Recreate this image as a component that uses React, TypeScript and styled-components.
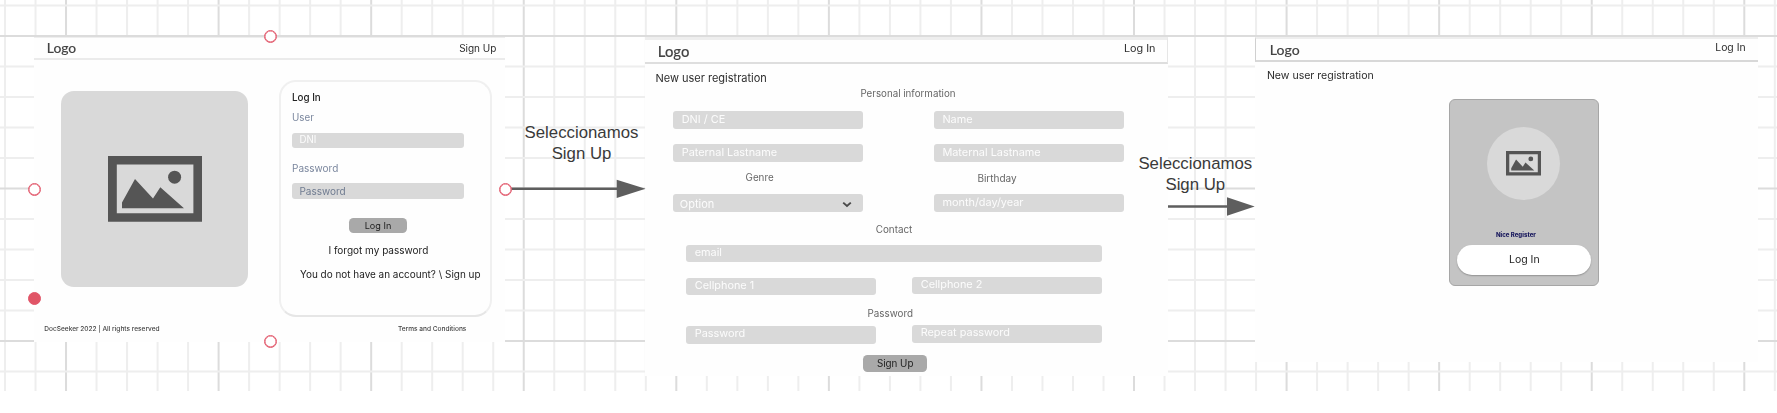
import styled, { createGlobalStyle } from 'styled-components';

const GlobalStyle = createGlobalStyle`
  * { box-sizing: border-box; }
  body { margin: 0; background: #fff; }
`;

const sans = 'Inter, "Liberation Sans", sans-serif';

/* ---------- canvas ---------- */

const Canvas = styled.main`
  position: relative;
  width: 1777px;
  height: 413px;
  overflow: hidden;
  background: #fff;
  font-family: ${sans};
`;

const GridLines = styled.svg`
  display: block;
`;

const Screen = styled.section<{ $x: number; $w: number; $h: number }>`
  position: absolute;
  left: ${p => p.$x}px;
  top: 37px;
  width: ${p => p.$w}px;
  height: ${p => p.$h}px;
  background: #fefefe;
  display: flex;
  flex-direction: column;
  align-items: flex-start;
  filter: blur(0.4px);
`;

const Handle = styled.span<{ $x: number; $y: number; $filled?: boolean }>`
  position: absolute;
  left: ${p => p.$x - 6.5}px;
  top: ${p => p.$y - 6.5}px;
  width: 13px;
  height: 13px;
  border: 1px solid #e2576a;
  border-radius: 50%;
  background: ${p => (p.$filled ? '#e05566' : '#fff')};
  box-shadow: inset 0 0 0 0.5px #e2576a;
`;

const Connector = styled.svg<{ $x: number; $y: number }>`
  position: absolute;
  left: ${p => p.$x}px;
  top: ${p => p.$y}px;
`;

const FlowLabel = styled.p<{ $x: number; $y: number }>`
  position: absolute;
  left: ${p => p.$x}px;
  top: ${p => p.$y}px;
  width: 130px;
  margin: 0;
  font: 16.8px/21px "Liberation Sans", Arial, sans-serif;
  text-align: center;
  color: #3a3a3a;
`;

/* ---------- shared screen parts ---------- */

const Header = styled.header<{ $h: number; $top: number; $pad: string; $line: string; $side?: string }>`
  display: flex;
  justify-content: space-between;
  align-items: flex-start;
  align-self: stretch;
  height: ${p => p.$h}px;
  padding: ${p => p.$pad};
  border-top: ${p => p.$top}px solid #eee;
  border-bottom: 2px solid ${p => p.$line};
  ${p => p.$side ?? ''}
`;

const Logo = styled.span<{ $size: number; $mt?: number }>`
  margin-top: ${p => p.$mt ?? 0}px;
  font: 500 ${p => p.$size}px/20px Lato, sans-serif;
  -webkit-text-stroke: 0.1px #444;
  color: #444;
`;

const Text = styled.span<{
  $size?: number; $mt?: number; $ml?: number; $color?: string; $weight?: number; $line?: number;
}>`
  display: block;
  flex: none;
  margin: ${p => p.$mt ?? 0}px 0 0 ${p => p.$ml ?? 0}px;
  font-size: ${p => p.$size ?? 10}px;
  font-weight: ${p => p.$weight ?? 400};
  line-height: ${p => p.$line ?? 14}px;
  color: ${p => p.$color ?? '#2c2c2c'};
  white-space: pre;
`;

const Field = styled.div<{
  $w: number; $h: number; $mt?: number; $ml?: number; $pad?: number; $line: number; $size?: number; $color?: string;
}>`
  display: flex;
  flex: none;
  justify-content: space-between;
  width: ${p => p.$w}px;
  height: ${p => p.$h}px;
  margin: ${p => p.$mt ?? 0}px 0 0 ${p => p.$ml ?? 0}px;
  padding: 0 11px 0 ${p => p.$pad ?? 8.4}px;
  border-radius: 3px;
  background: #d9d9d9;
  color: ${p => p.$color ?? '#fcfcfc'};
  font-size: ${p => p.$size ?? 10.9}px;
  line-height: ${p => p.$line}px;
  white-space: pre;
`;

const Button = styled.button<{ $w: number; $h: number; $mt: number; $ml: number; $line: number; $size: number }>`
  flex: none;
  width: ${p => p.$w}px;
  height: ${p => p.$h}px;
  margin: ${p => p.$mt}px 0 0 ${p => p.$ml}px;
  padding: 0;
  border: 0;
  border-radius: 4.5px;
  background: #a9a9a9;
  color: #1c1c1c;
  font-family: ${sans};
  font-size: ${p => p.$size}px;
  line-height: ${p => p.$line}px;
`;

const Row = styled.div<{ $mt: number; $ml: number; $gap: number }>`
  display: flex;
  align-items: flex-start;
  gap: ${p => p.$gap}px;
  margin: ${p => p.$mt}px 0 0 ${p => p.$ml}px;
`;

const Cell = styled.div<{ $pad: number }>`
  width: 189.7px;
  padding-left: ${p => p.$pad}px;
`;

const Picture = ({ width }: { width: number }) => (
  <svg width={width} height={width * 0.7} viewBox="0 0 94 65.8">
    <path fill="#555" fillRule="evenodd" d="M0 0H94V65.8H0ZM8.8 8.6V57.2H85.4V8.6Z" />
    <path fill="#555" d="M14 46.5 27 23 45 42.4 52.3 31.2 76 52.3H14Z" />
    <circle cx="66.6" cy="21.2" r="6.5" fill="#555" />
  </svg>
);

/* ---------- login screen ---------- */

const LoginBody = styled.div`
  display: flex;
  align-items: flex-start;
  gap: 31px;
  padding-left: 27px;
`;

const PictureBlock = styled.div`
  display: flex;
  align-items: center;
  justify-content: center;
  width: 187px;
  height: 196px;
  margin-top: 31px;
  border-radius: 13px;
  background: #d9d9d9;
`;

const LoginCard = styled.form`
  display: flex;
  flex-direction: column;
  align-items: flex-start;
  width: 213px;
  height: 237px;
  margin: 20px 0 0;
  padding: 9px 0 0 11px;
  border: 2px solid #f0f0f0;
  border-bottom-color: #e6e6e6;
  border-radius: 17px;
`;

const Footer = styled.footer`
  display: flex;
  justify-content: space-between;
  align-self: stretch;
  padding: 6.6px 38.6px 0 10.3px;
`;

/* ---------- confirmation screen ---------- */

const DoneCard = styled.div`
  display: flex;
  flex-direction: column;
  align-items: flex-start;
  width: 150px;
  height: 187px;
  margin: 15.8px 0 0 194.3px;
  border: 1px solid #a6a6a6;
  border-radius: 6px;
  background: #c4c4c4;
`;

const Avatar = styled.div`
  display: flex;
  align-items: center;
  justify-content: center;
  width: 73px;
  height: 73px;
  margin: 27px 0 0 37px;
  border-radius: 50%;
  background: #d9d9d9;
`;

const PillButton = styled(Button)`
  border-radius: 15px;
  background: #fff;
  box-shadow: 0 1px 1.5px rgba(0, 0, 0, 0.25);
`;

/* Grid pitch is 30.51px; every fifth line is darker. */
const PITCH = 30.514;
const columns = Array.from({ length: 59 }, (_, i) => ({ at: 5 + i * PITCH, major: i % 5 === 2 }));
const rows = Array.from({ length: 13 }, (_, i) => ({ at: 5.4 + i * PITCH, major: i % 5 === 1 }));
const stroke = (major: boolean) => (major ? '#dcdcdc' : '#eeeeee');
const byShade = (a: { major: boolean }, b: { major: boolean }) => Number(a.major) - Number(b.major);

export default function App() {
  return (
    <>
      <GlobalStyle />
      <Canvas>
        <GridLines width="1777" height="391" strokeWidth="2">
          {[...columns].sort(byShade).map(l => (
            <line key={l.at} x1={l.at} x2={l.at} y1="0" y2="391" stroke={stroke(l.major)} />
          ))}
          {[...rows].sort(byShade).map(l => (
            <line key={l.at} x1="0" x2="1777" y1={l.at} y2={l.at} stroke={stroke(l.major)} />
          ))}
        </GridLines>

        <Screen $x={34} $w={471} $h={305}>
          <Header $h={23} $top={1} $pad="0 8.6px 0 12.8px" $line="#ebebeb">
            <Logo $size={13.8}>Logo</Logo>
            <Text $mt={3}>Sign Up</Text>
          </Header>
          <LoginBody>
            <PictureBlock><Picture width={94} /></PictureBlock>
            <LoginCard>
              <Text $weight={500} $size={9.8} $color="#222">Log In</Text>
              <Text $mt={6} $size={9.8} $color="#7b879e">User</Text>
              <Field $w={172} $h={15} $mt={8} $line={14.3} $size={9.7} $pad={7.4}>DNI</Field>
              <Text $mt={12.6} $color="#7b879e">Password</Text>
              <Field $w={172} $h={16} $mt={8.5} $line={16} $size={10} $pad={7.4} $color="#6f7b90">Password</Field>
              <Button $w={58} $h={15.3} $mt={19} $ml={57} $line={15.4} $size={9.1}>Log In</Button>
              <Text $mt={10} $ml={36.4} $color="#222">I forgot my password</Text>
              <Text $mt={9.6} $ml={8} $size={9.95} $color="#222">{'You do not have an account? \\ Sign up'}</Text>
            </LoginCard>
          </LoginBody>
          <Footer>
            <Text $size={6.55} $line={10} $weight={500} $color="#444">DocSeeker 2022 | All rights reserved</Text>
            <Text $size={6.55} $line={10} $weight={500} $color="#444">Terms and Conditions</Text>
          </Footer>
        </Screen>

        <Screen $x={645} $w={523} $h={339}>
          <Header $h={27} $top={3} $pad="0 11.6px 0 12.8px" $line="#dedede" $side="border-right: 1px solid #e6e6e6;">
            <Logo $size={14.8} $mt={1.2}>Logo</Logo>
            <Text $size={10.8} $mt={2.4}>Log In</Text>
          </Header>
          <Text $size={11} $mt={7.2} $ml={10.4} $color="#2c2c2c">New user registration</Text>
          <Text $size={9.75} $mt={1.5} $ml={215.4} $color="#666">Personal information</Text>
          <Row $mt={10.8} $ml={28.3} $gap={71}>
            <Field $w={189.7} $h={17.5} $line={16}>DNI / CE</Field>
            <Field $w={189.7} $h={17.5} $line={16}>Name</Field>
          </Row>
          <Row $mt={15.5} $ml={28.3} $gap={71}>
            <Field $w={189.7} $h={17.5} $line={16}>Paternal Lastname</Field>
            <Field $w={189.7} $h={17.5} $line={16}>Maternal Lastname</Field>
          </Row>
          <Row $mt={9.1} $ml={28.3} $gap={71}>
            <Cell $pad={72.3}><Text $size={9.8} $color="#666">Genre</Text></Cell>
            <Cell $pad={43.4}><Text $size={10} $color="#666">Birthday</Text></Cell>
          </Row>
          <Row $mt={9.4} $ml={28.3} $gap={71}>
            <Field $w={189.7} $h={17.5} $line={20.4} $pad={6.5} $size={11}>
              Option
              <svg width="10" height="18" viewBox="-1 0 10 18">
                <path d="M.2 8.6 4 12 7.8 8.6" fill="none" stroke="#4a4a4a" strokeWidth="1.9" />
              </svg>
            </Field>
            <Field $w={189.7} $h={17.5} $line={16}>month/day/year</Field>
          </Row>
          <Text $mt={9.6} $ml={230.7} $size={9.9} $color="#666">Contact</Text>
          <Field $w={415.7} $h={17.3} $mt={9.4} $ml={41.3} $line={15}>email</Field>
          <Row $mt={14.4} $ml={41.3} $gap={36.3}>
            <Field $w={189.7} $h={17.5} $mt={1.3} $line={15}>Cellphone 1</Field>
            <Field $w={189.7} $h={17.5} $line={15}>Cellphone 2</Field>
          </Row>
          <Text $mt={11.8} $ml={222.6} $size={9.8} $color="#666">Password</Text>
          <Row $mt={3.9} $ml={41.3} $gap={36.3}>
            <Field $w={189.7} $h={17.5} $mt={1.3} $line={15}>Password</Field>
            <Field $w={189.7} $h={17.5} $line={15}>Repeat password</Field>
          </Row>
          <Button $w={64.3} $h={17.3} $mt={11} $ml={218} $line={17.4} $size={9.8}>Sign Up</Button>
        </Screen>

        <Screen $x={1255} $w={503} $h={325}>
          <Header $h={25} $top={2} $pad="0 12.4px 0 13.8px" $line="#d8d8d8" $side="border-left: 1px solid #d0d0d0;">
            <Logo $size={14} $mt={0.6}>Logo</Logo>
            <Text $size={10.4} $mt={2}>Log In</Text>
          </Header>
          <Text $size={10.55} $mt={7.4} $ml={11.9} $color="#2c2c2c">New user registration</Text>
          <DoneCard>
            <Avatar><Picture width={35} /></Avatar>
            <Text $size={6.05} $weight={800} $line={8} $mt={30.4} $ml={45.6} $color="#1a1a5e">Nice Register</Text>
            <PillButton $w={134} $h={30.3} $mt={6.4} $ml={7} $line={30.4} $size={10.5}>Log In</PillButton>
          </DoneCard>
        </Screen>

        <Connector $x={506} $y={178} width="140" height="22">
          <path d="M0 10.8H112" stroke="#5e5e5e" strokeWidth="2.6" />
          <path d="M110.7 1.8 139.5 10.8 110.7 20.1Z" fill="#5e5e5e" />
        </Connector>
        <Connector $x={1168} $y={195} width="88" height="22">
          <path d="M0 11.5H60" stroke="#5e5e5e" strokeWidth="2.6" />
          <path d="M59 2.3 86.7 11.5 59 20.8Z" fill="#5e5e5e" />
        </Connector>
        <FlowLabel $x={516.5} $y={122}>Seleccionamos<br />Sign Up</FlowLabel>
        <FlowLabel $x={1130.3} $y={153}>Seleccionamos<br />Sign Up</FlowLabel>

        <Handle $x={270.2} $y={36.5} />
        <Handle $x={34.6} $y={189} />
        <Handle $x={505.5} $y={189} />
        <Handle $x={270.2} $y={341.5} />
        <Handle $x={34.6} $y={298} $filled />
      </Canvas>
    </>
  );
}
